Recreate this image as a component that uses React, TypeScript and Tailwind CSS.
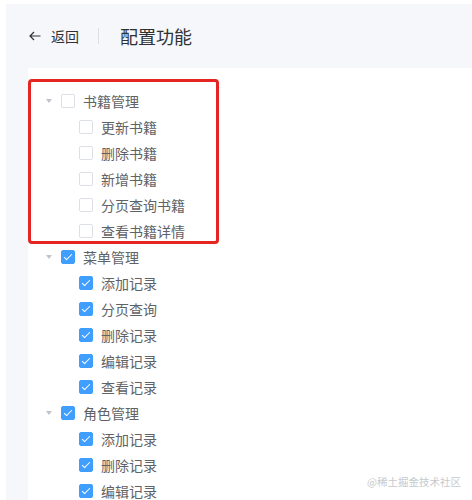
type Group = { label: string; checked: boolean; children: string[] };

const groups: Group[] = [
  { label: "书籍管理", checked: false, children: ["更新书籍", "删除书籍", "新增书籍", "分页查询书籍", "查看书籍详情"] },
  { label: "菜单管理", checked: true, children: ["添加记录", "分页查询", "删除记录", "编辑记录", "查看记录"] },
  { label: "角色管理", checked: true, children: ["添加记录", "删除记录", "编辑记录"] },
];

function Checkbox({ checked }: { checked: boolean }) {
  return checked ? (
    <span className="relative mr-2 inline-block h-[14px] w-[14px] shrink-0 rounded-[2px] border border-[#409eff] bg-[#409eff]">
      <span className="absolute left-[4px] top-[1px] h-[8px] w-[4px] rotate-45 border-b border-r border-white" />
    </span>
  ) : (
    <span className="mr-2 inline-block h-[14px] w-[14px] shrink-0 rounded-[2px] border border-[#dcdfe6] bg-white" />
  );
}

function Row({ label, checked, depth }: { label: string; checked: boolean; depth: number }) {
  return (
    <div className="flex h-[26px] items-center" style={{ paddingLeft: depth * 18 }}>
      <span className="flex w-[24px] shrink-0 items-center justify-center">
        {depth === 0 && <span className="h-0 w-0 border-x-[3.5px] border-t-[4px] border-x-transparent border-t-[#c0c4cc]" />}
      </span>
      <Checkbox checked={checked} />
      <span className="text-[14px] leading-none text-[#606266]">{label}</span>
    </div>
  );
}

export default function App() {
  return (
    <div className="relative h-[500px] overflow-hidden bg-white pl-[6px] pt-[4px] font-['Noto_Sans_CJK_SC',sans-serif]">
      <div className="flex h-[496px] flex-col bg-[#f5f7fa]">
        <header className="flex h-[64px] shrink-0 items-center pl-[23px]">
          <svg width="12" height="10" viewBox="0 0 12 10" className="mr-[10px]" fill="none" stroke="#303133" strokeWidth="1.2">
            <path d="M11.5 5H1M5 1L1 5L5 9" />
          </svg>
          <span className="text-[14px] text-[#303133]">返回</span>
          <span className="ml-[19px] mr-[21px] h-[16px] w-px bg-[#dcdfe6]" />
          <h1 className="text-[18px] text-[#303133]">配置功能</h1>
        </header>
        <section className="ml-[22px] flex-1 bg-white pl-[9px] pt-[20px]">
          {groups.map((g, i) => (
            <div key={i} className="relative">
              <Row label={g.label} checked={g.checked} depth={0} />
              {g.children.map((c, j) => (
                <Row key={j} label={c} checked={g.checked} depth={1} />
              ))}
              {i === 0 && (
                <div className="pointer-events-none absolute left-[-9px] top-[-9px] h-[165px] w-[191px] rounded-[4px] border-[3px] border-[#e52521]" />
              )}
            </div>
          ))}
        </section>
      </div>
      <span className="absolute left-[367px] top-[474px] whitespace-nowrap text-[10.5px] text-[#c8c9cc]">@稀土掘金技术社区</span>
    </div>
  );
}
